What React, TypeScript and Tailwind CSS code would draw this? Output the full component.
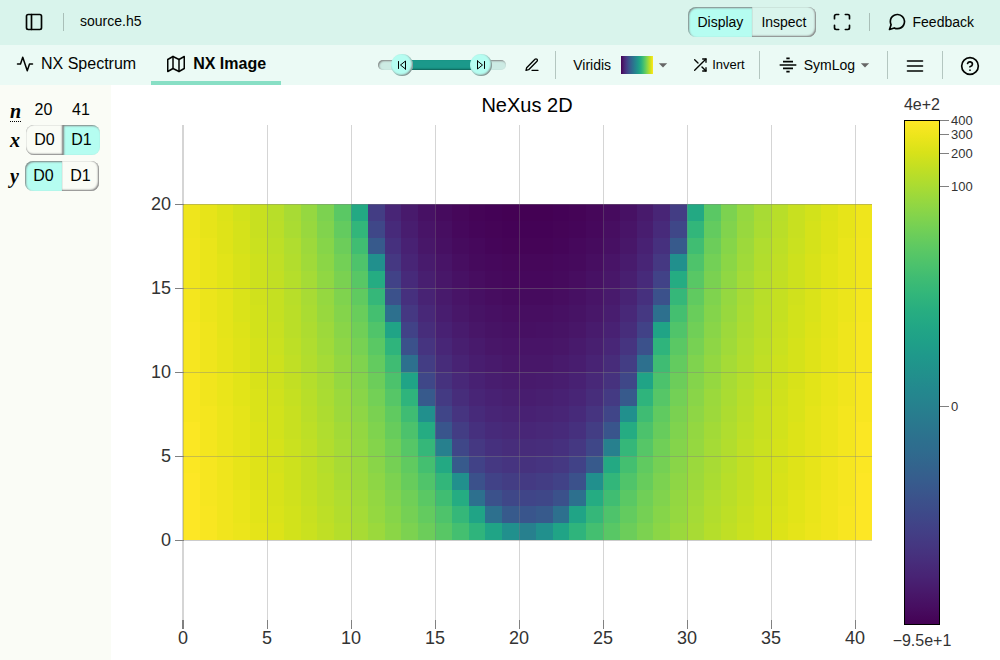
import React, { useState } from 'react';
import clsx from 'clsx';
import {
  FiActivity,
  FiEdit3,
  FiHelpCircle,
  FiMap,
  FiMaximize,
  FiMenu,
  FiMessageCircle,
  FiShuffle,
  FiSidebar,
  FiSkipBack,
  FiSkipForward,
} from 'react-icons/fi';
import { MdArrowDropDown, MdGraphicEq } from 'react-icons/md';

const VIRIDIS =
  '44015444025645045745055946075a46085c460a5d460b5e470d60470e6147106347116447136548146748166848176948186a481a6c481b6d481c6e481d6f481f70482071482173482374482475482576482677482878482979472a7a472c7a472d7b472e7c472f7d46307e46327e46337f463480453581453781453882443983443a83443b84433d84433e85423f854240864241864142874144874045884046883f47883f48893e49893e4a893e4c8a3d4d8a3d4e8a3c4f8a3c508b3b518b3b528b3a538b3a548c39558c39568c38588c38598c375a8c375b8d365c8d365d8d355e8d355f8d34608d34618d33628d33638d32648e32658e31668e31678e31688e30698e306a8e2f6b8e2f6c8e2e6d8e2e6e8e2e6f8e2d708e2d718e2c718e2c728e2c738e2b748e2b758e2a768e2a778e2a788e29798e297a8e297b8e287c8e287d8e277e8e277f8e27808e26818e26828e26828e25838e25848e25858e24868e24878e23888e23898e238a8d228b8d228c8d228d8d218e8d218f8d21908d21918c20928c20928c20938c1f948c1f958b1f968b1f978b1f988b1f998a1f9a8a1e9b8a1e9c891e9d891f9e891f9f881fa0881fa1881fa1871fa28720a38620a48621a58521a68522a78522a88423a98324aa8325ab8225ac8226ad8127ad8128ae8029af7f2ab07f2cb17e2db27d2eb37c2fb47c31b57b32b67a34b67935b77937b87838b9773aba763bbb753dbc743fbc7340bd7242be7144bf7046c06f48c16e4ac16d4cc26c4ec36b50c46a52c56954c56856c66758c7655ac8645cc8635ec96260ca6063cb5f65cb5e67cc5c69cd5b6ccd5a6ece5870cf5773d05675d05477d1537ad1517cd2507fd34e81d34d84d44b86d54989d5488bd6468ed64590d74393d74195d84098d83e9bd93c9dd93ba0da39a2da37a5db36a8db34aadc32addc30b0dd2fb2dd2db5de2bb8de29bade28bddf26c0df25c2df23c5e021c8e020cae11fcde11dd0e11cd2e21bd5e21ad8e219dae319dde318dfe318e2e418e5e419e7e419eae51aece51befe51cf1e51df4e61ef6e620f8e621fbe723fde725';

const ROWS = 20;
const COLS = 41;
const DOMAIN = [-95, 400];

const viridis = (t: number) => {
  const i = Math.max(0, Math.min(255, Math.floor(t * 256)));
  return `#${VIRIDIS.slice(i * 6, i * 6 + 6)}`;
};

const symlog = (v: number) => Math.sign(v) * Math.log1p(Math.abs(v));

const normalize = (v: number) =>
  (symlog(v) - symlog(DOMAIN[0])) / (symlog(DOMAIN[1]) - symlog(DOMAIN[0]));

const STOPS = Array.from({ length: 33 }, (_, i) => ({ offset: i / 32, color: viridis(i / 32) }));

const cells = Array.from({ length: ROWS * COLS }, (_, i) => {
  const row = Math.floor(i / COLS);
  const col = i % COLS;
  return { row, col, value: (col - 20) ** 2 - 5 * row };
});

const Separator = () => <span className="h-[18px] w-px bg-[#a9bfb8]" />;
const ToolSeparator = () => <span className="h-7 w-px bg-[#b4c6c0]" />;

interface ToggleGroupProps {
  label: string;
  options: string[];
  initial: string;
  optionClass: string;
}

const ToggleGroup: React.FC<ToggleGroupProps> = ({ label, options, initial, optionClass }) => {
  const [selected, setSelected] = useState(initial);

  return (
    <div role="radiogroup" aria-label={label} className="flex h-[30px]">
      {options.map(option => (
        <button
          key={option}
          type="button"
          role="radio"
          aria-checked={option === selected}
          onClick={() => setSelected(option)}
          className={clsx(
            'first:rounded-l-lg last:rounded-r-lg',
            optionClass,
            option === selected
              ? 'bg-[#b5fdf1] shadow-[inset_1px_1px_2px_gray]'
              : 'shadow-[inset_-1px_-1px_2px_gray,inset_0_0_1px_gray]'
          )}
        >
          {option}
        </button>
      ))}
    </div>
  );
};

const Header = () => (
  <header className="flex h-[45px] items-center bg-[#d9f4ec] pr-[26px] pb-px pl-6 text-sm">
    <button type="button" aria-label="Toggle sidebar" className="mr-[19px]">
      <FiSidebar className="size-5" />
    </button>
    <Separator />
    <span className="ml-4 flex-1 pb-[2px]">source.h5</span>
    <ToggleGroup
      label="View mode"
      options={['Display', 'Inspect']}
      initial="Display"
      optionClass="px-[9px]"
    />
    <button type="button" aria-label="Toggle fullscreen" className="mr-[17px] ml-4">
      <FiMaximize className="size-5" />
    </button>
    <Separator />
    <a href="#feedback" className="ml-[17px] flex items-center gap-[6px]">
      <FiMessageCircle className="size-5" />
      Feedback
    </a>
  </header>
);

const DomainSlider = () => (
  <div className="relative flex h-[22px] w-32 items-center">
    <div className="h-[10px] w-full rounded-full bg-[#cdebe4] shadow-[inset_1px_1px_2px_gray]" />
    <div className="absolute left-6 h-[10px] w-20 bg-[#1b998b] shadow-[inset_0_-1px_2px_#0e5f56]" />
    <span className="absolute left-[13px] flex size-[22px] items-center justify-center rounded-full bg-[#b5fdf1] shadow-[inset_-1px_-1px_2px_gray]">
      <FiSkipBack className="size-3" />
    </span>
    <span className="absolute left-[92px] flex size-[22px] items-center justify-center rounded-full bg-[#b5fdf1] shadow-[inset_-1px_-1px_2px_gray]">
      <FiSkipForward className="size-3" />
    </span>
    <input
      type="range"
      aria-label="Domain minimum"
      defaultValue={15}
      className="absolute left-0 w-16 opacity-0"
    />
    <input
      type="range"
      aria-label="Domain maximum"
      defaultValue={85}
      className="absolute right-0 w-16 opacity-0"
    />
  </div>
);

const Toolbar = () => (
  <div className="flex h-10 items-center bg-[#ebfaf5] pr-5 text-sm">
    <div role="tablist" aria-label="Visualization" className="flex h-full flex-1 text-base">
      <button
        type="button"
        role="tab"
        aria-selected="false"
        className="flex items-center gap-[7px] pr-[15px] pl-4 pb-[3px]"
      >
        <FiActivity className="size-[18px]" />
        NX Spectrum
      </button>
      <button
        type="button"
        role="tab"
        aria-selected="true"
        className="flex items-center gap-2 border-b-4 border-[#88dfc5] pt-px pr-[15px] pl-4 font-bold"
      >
        <FiMap className="size-[18px]" />
        NX Image
      </button>
    </div>

    <DomainSlider />
    <button type="button" aria-label="Edit domain" className="mr-[15px] ml-[18px]">
      <FiEdit3 className="size-4" />
    </button>
    <ToolSeparator />
    <button type="button" aria-haspopup="listbox" className="ml-[17px] flex items-center">
      Viridis
      <svg className="ml-[10px] h-[18px] w-8" viewBox="0 0 32 18" preserveAspectRatio="none">
        <defs>
          <linearGradient id="swatch">
            {STOPS.map(({ offset, color }) => (
              <stop key={offset} offset={offset} stopColor={color} />
            ))}
          </linearGradient>
        </defs>
        <rect width="32" height="18" fill="url(#swatch)" />
      </svg>
      <MdArrowDropDown className="size-5 text-[#666]" />
    </button>
    <button type="button" className="mr-[14px] ml-[19px] flex items-center gap-1 text-[13px]">
      <FiShuffle className="size-4" />
      Invert
    </button>
    <ToolSeparator />
    <button type="button" aria-haspopup="listbox" className="mr-3 ml-[18px] flex items-center">
      <MdGraphicEq className="mr-[6px] size-5 rotate-90" />
      SymLog
      <MdArrowDropDown className="size-5 text-[#666]" />
    </button>
    <ToolSeparator />
    <button type="button" aria-label="More controls" className="mx-[17px] pt-[2px]">
      <FiMenu className="size-5" />
    </button>
    <ToolSeparator />
    <button type="button" aria-label="Help" className="ml-[17px] pt-[2px]">
      <FiHelpCircle className="size-5" />
    </button>
  </div>
);

const DimensionMapper = () => (
  <aside className="w-[111px] shrink-0 bg-[#fafcf6] pt-[10px] pl-[10px]">
    <div className="flex h-[30px] items-center">
      <abbr
        title="Number of elements"
        className="mt-[2px] w-[11px] border-b border-dotted border-black font-['Liberation_Serif',serif] text-xl leading-5 font-bold italic no-underline"
      >
        n
      </abbr>
      <span className="ml-1 w-[37px] text-center">20</span>
      <span className="w-[38px] text-center">41</span>
    </div>
    <div className="flex h-[30px] items-center gap-[6px]">
      <span className="font-['Liberation_Serif',serif] text-xl font-bold italic">x</span>
      <ToggleGroup label="x axis" options={['D0', 'D1']} initial="D1" optionClass="w-[37px]" />
    </div>
    <div className="mt-[6px] flex h-[30px] items-center gap-[6px]">
      <span className="font-['Liberation_Serif',serif] text-xl font-bold italic">y</span>
      <ToggleGroup label="y axis" options={['D0', 'D1']} initial="D0" optionClass="w-[37px]" />
    </div>
  </aside>
);

const LEFT = 72;
const RIGHT = 761;
const TOP = 40;
const BOTTOM = 540;
const ORIGIN_Y = 455;
const CELL = 16.8;

const Heatmap = () => {
  const xTicks = [0, 5, 10, 15, 20, 25, 30, 35, 40];
  const yTicks = [0, 5, 10, 15, 20];

  return (
    <svg
      viewBox="0 0 781 575"
      className="h-auto min-w-0 flex-1"
      role="img"
      aria-label="NeXus 2D heatmap"
      fontFamily="'Liberation Sans', Arial, sans-serif"
    >
      <text x="416" y="27" textAnchor="middle" fontSize="20">
        NeXus 2D
      </text>
      <g shapeRendering="crispEdges">
        {cells.map(({ row, col, value }) => (
          <rect
            key={`${row}-${col}`}
            x={LEFT + col * CELL}
            y={ORIGIN_Y - (row + 1) * CELL}
            width={CELL}
            height={CELL}
            fill={viridis(normalize(value))}
          />
        ))}
        {xTicks.map(tick => {
          const x = tick === 0 ? LEFT - 1 : LEFT + tick * CELL;
          const width = tick === 0 ? 2 : 1;
          return (
            <g key={tick} fill="gray">
              <rect x={x} y={TOP} width={width} height={BOTTOM - TOP - 5} opacity="0.33" />
              <rect x={x} y={BOTTOM - 5} width={width} height="9" />
            </g>
          );
        })}
        {yTicks.map(tick => {
          const y = ORIGIN_Y - tick * CELL;
          return (
            <g key={tick} fill="gray">
              <rect x={LEFT} y={y} width={RIGHT - LEFT} height="1" opacity="0.4" />
              <rect x={LEFT - 8} y={y} width="9" height="1" />
            </g>
          );
        })}
      </g>
      <g fontSize="18" fill="#333">
        {xTicks.map(tick => (
          <text key={tick} x={LEFT + tick * CELL} y={BOTTOM + 19} textAnchor="middle">
            {tick}
          </text>
        ))}
        {yTicks.map(tick => (
          <text key={tick} x={LEFT - 12} y={ORIGIN_Y - tick * CELL + 6} textAnchor="end">
            {tick}
          </text>
        ))}
      </g>
    </svg>
  );
};

const ColorBar = () => (
  <svg
    viewBox="0 0 108 575"
    className="w-[108px] shrink-0"
    role="img"
    aria-label="Color scale"
    fontFamily="'Liberation Sans', Arial, sans-serif"
    fill="#333"
  >
    <defs>
      <linearGradient id="colorbar" x1="0" y1="1" x2="0" y2="0">
        {STOPS.map(({ offset, color }) => (
          <stop key={offset} offset={offset} stopColor={color} />
        ))}
      </linearGradient>
    </defs>
    <text x="30" y="25" textAnchor="middle" fontSize="16">
      4e+2
    </text>
    <rect x="12" y="35" width="36" height="505" fill="black" />
    <rect x="13" y="36" width="34" height="503" fill="url(#colorbar)" />
    {[400, 300, 200, 100, 0].map(tick => {
      const y = Math.round(538 - normalize(tick) * 503);
      return (
        <g key={tick}>
          <rect x="48" y={y} width="9" height="1" fill="gray" />
          <text x="59" y={y + 5} fontSize="13">
            {tick}
          </text>
        </g>
      );
    })}
    <text x="30" y="561" textAnchor="middle" fontSize="16">
      −9.5e+1
    </text>
  </svg>
);

export default function App() {
  return (
    <div className="flex min-h-screen flex-col bg-white font-['Liberation_Sans',Arial,sans-serif] text-[#020402]">
      <Header />
      <Toolbar />
      <main className="flex flex-1">
        <DimensionMapper />
        <div className="flex min-w-0 flex-1 items-start">
          <Heatmap />
          <ColorBar />
        </div>
      </main>
    </div>
  );
}
